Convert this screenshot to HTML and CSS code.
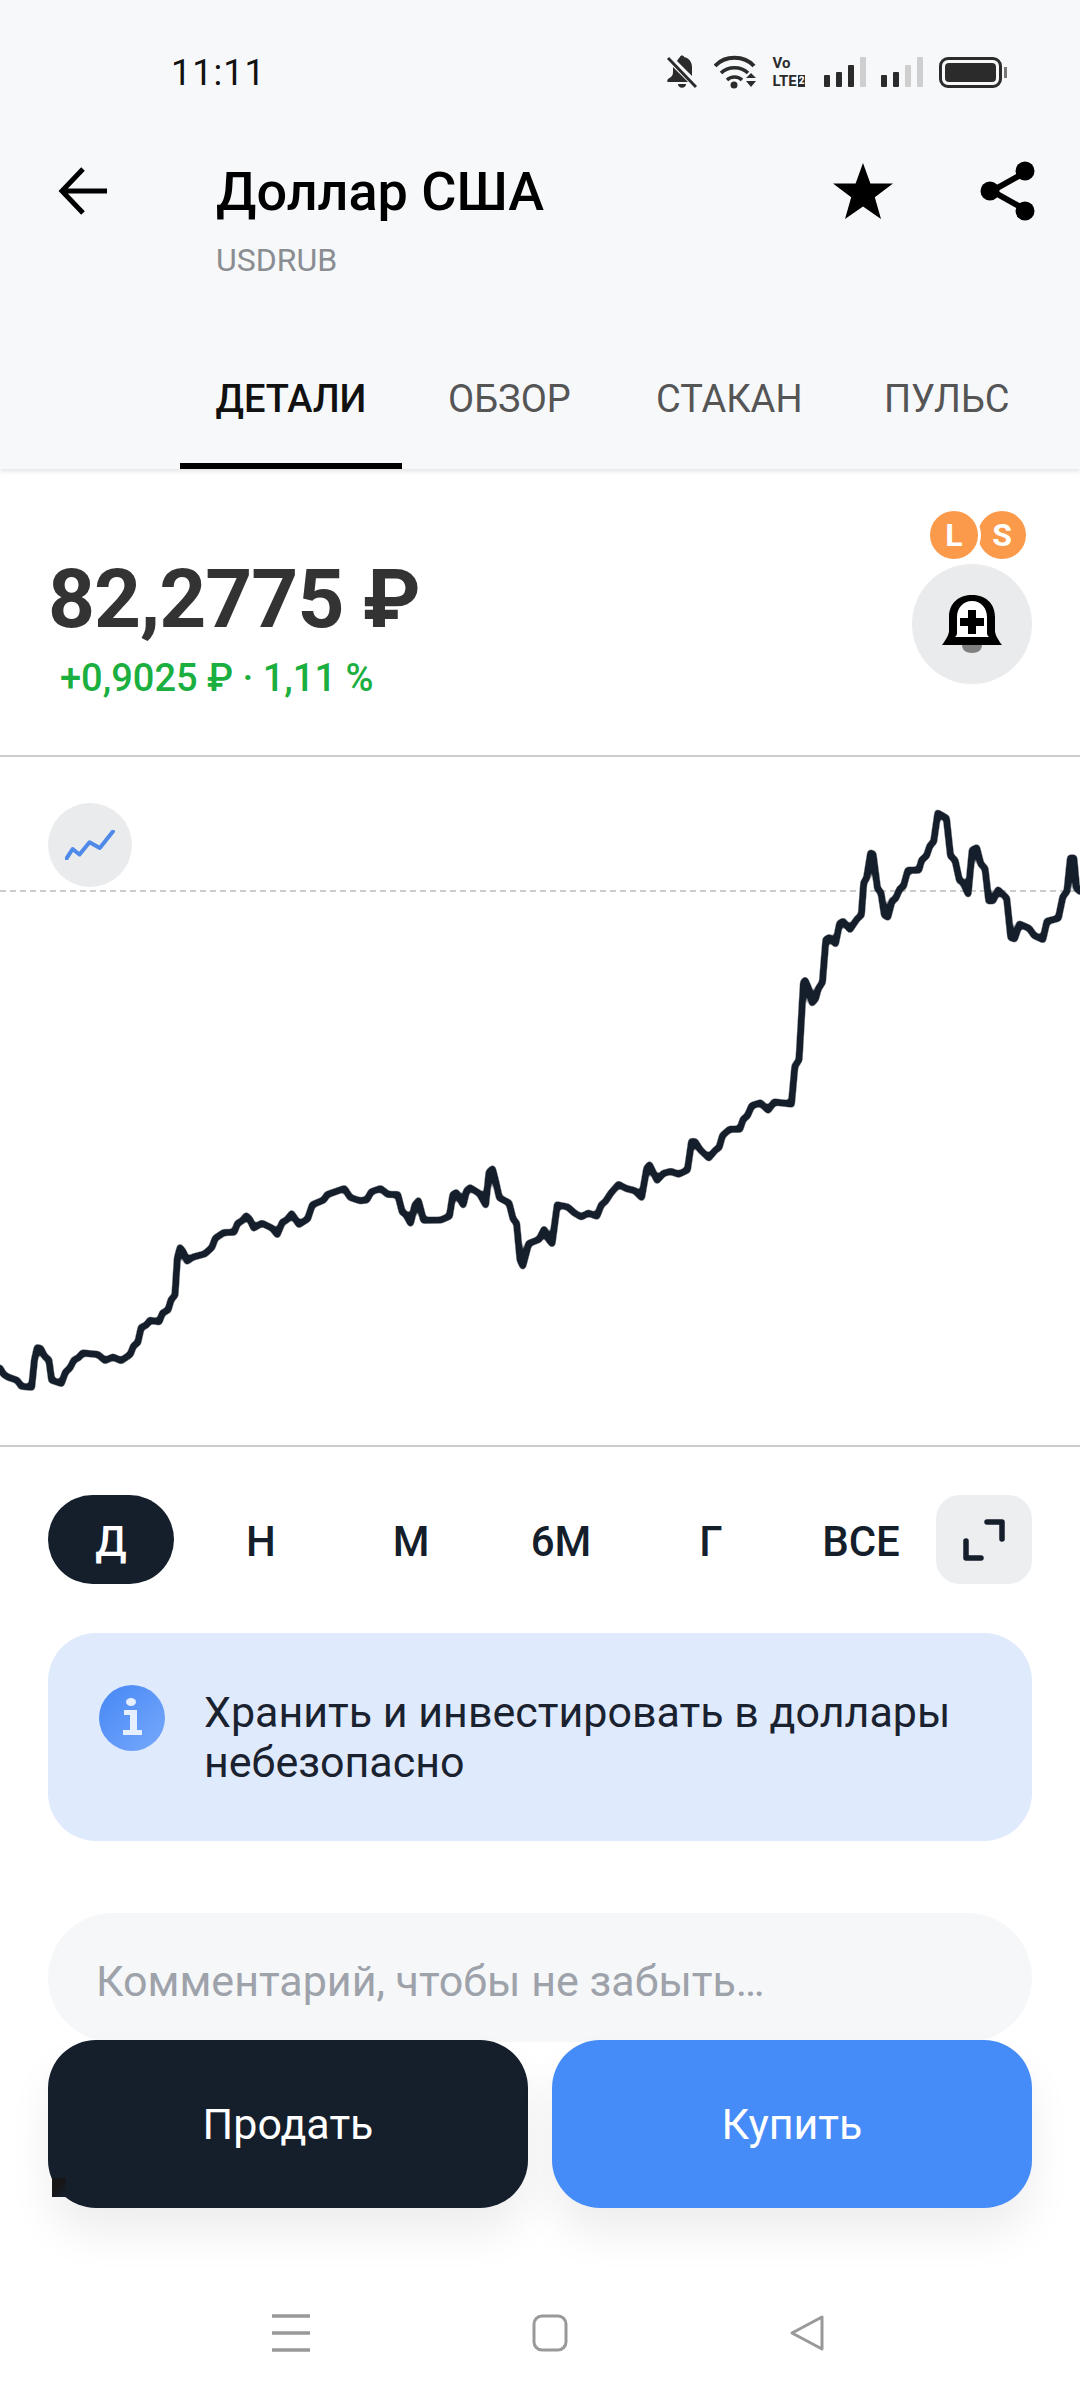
FILE: index.html
```html
<!DOCTYPE html>
<html lang="ru">
<head>
<meta charset="utf-8">
<title>Доллар США</title>
<link rel="stylesheet" href="styles.css">
</head>
<body>
<div class="screen">
  <header class="top">
    <div class="status">
      <span class="clock">11:11</span>
      <div class="status-icons">
        <svg class="si-bell" viewBox="0 0 30 34" width="30" height="34"><path fill="#2b2b2b" d="M13 2c0-2 4-2 4 0 5 1 8 5 8 10v9l-15-15c1-2 2-3 3-4zM6 12l15 15H1c-1 0-1-2 0-3 3-2 5-3 5-7zM11 29h8c0 5-8 5-8 0z"/><path stroke="#2b2b2b" stroke-width="3" d="M1 3l28 29"/></svg>
        <svg class="si-wifi" viewBox="0 0 42 34" width="42" height="34"><g fill="none" stroke="#2b2b2b" stroke-width="4"><path d="M1 11C11 0 30 0 40 11"/><path d="M7 18c7-7 20-7 27 0" stroke-width="3.5"/><path d="M13 25c4-4 11-4 15 0" stroke-width="3.5"/></g><circle cx="20" cy="30" r="3.5" fill="#2b2b2b"/><path fill="#2b2b2b" d="M38 18l5 5H33zM33 26h10l-5 6z" transform="translate(-1 0)"/></svg>
        <div class="si-volte"><span class="vo">Vo</span><span class="lte">LTE<b>2</b></span></div>
        <div class="bars"><i class="b1"></i><i class="b2"></i><i class="b3"></i><i class="b4 off"></i></div>
        <div class="bars"><i class="b1"></i><i class="b2"></i><i class="b3 off"></i><i class="b4 off"></i></div>
        <div class="battery"><div class="battery-fill"></div></div>
      </div>
    </div>
    <div class="title-row">
      <svg class="back" viewBox="0 0 50 50" width="50" height="50"><path d="M49 25H6M25 3L4 25l21 22" fill="none" stroke="#000" stroke-width="5"/></svg>
      <div class="title-text">
        <h1 class="title">Доллар США</h1>
        <div class="ticker">USDRUB</div>
      </div>
      <svg class="star" viewBox="0 0 60 56" width="60" height="56"><path d="M30 0l7.4 20.5H60L41.8 34.2 48 56 30 43.5 12 56l6.2-21.8L0 20.5h22.6z"/></svg>
      <svg class="share" viewBox="0 0 56 60" width="56" height="60"><path d="M44 12L12 30l32 18" fill="none" stroke="#000" stroke-width="6"/><circle cx="45" cy="10" r="9.5"/><circle cx="10" cy="30" r="9.5"/><circle cx="45" cy="50" r="9.5"/></svg>
    </div>
    <nav class="tabs">
      <div class="tab active">ДЕТАЛИ</div>
      <div class="tab t2">ОБЗОР</div>
      <div class="tab t3">СТАКАН</div>
      <div class="tab t4">ПУЛЬС</div>
    </nav>
  </header>

  <section class="quote">
    <div class="quote-text">
      <div class="price">82,2775 ₽</div>
      <div class="change">+0,9025 ₽ · 1,11 %</div>
    </div>
    <div class="alert">
      <div class="flags"><span class="flag">L</span><span class="flag flag-s">S</span></div>
      <div class="bell-btn">
        <svg viewBox="0 0 60 58" width="60" height="58"><path fill="#808080" d="M20 50h20c0 5-4 8-10 8s-10-3-10-8z"/><path d="M30 0C42 0 53 7 53 22V36C53 40 57 46 60 50H0C3 46 7 40 7 36V22C7 7 18 0 30 0z"/><path fill="#fff" d="M30 6C39 6 45 13 45 22V38C45 40 46 41 47 42H13C14 41 15 40 15 38V22C15 13 21 6 30 6z"/><path d="M26 15h8v8h8v8h-8v8h-8v-8h-8v-8h8z"/></svg>
      </div>
    </div>
  </section>

  <section class="chart">
    <svg class="chart-svg" viewBox="0 0 1080 688" width="1080" height="688">
      <defs>
        <filter id="soft" filterUnits="userSpaceOnUse" x="0" y="0" width="1080" height="688" color-interpolation-filters="sRGB">
          <feGaussianBlur stdDeviation="1.5"/>
          <feComponentTransfer><feFuncA type="linear" slope="3" intercept="-0.85"/></feComponentTransfer>
        </filter>
      </defs>
      <path class="ref-line" d="M0 134H1080"/>
      <g filter="url(#soft)">
      <g transform="translate(0 23.5) scale(.3444 .408)">
        <polyline class="curve" points="0,1440 10,1455 25,1463 50,1470 62,1485 92,1487 100,1420 108,1390 118,1392 130,1412 142,1420 150,1470 178,1478 190,1450 203,1440 215,1420 228,1415 240,1403 285,1407 305,1422 328,1413 352,1422 378,1407 388,1385 400,1378 410,1340 425,1335 435,1323 462,1327 472,1305 488,1298 497,1272 508,1262 515,1170 523,1145 532,1155 543,1178 560,1168 595,1160 615,1145 625,1122 650,1108 680,1107 690,1085 702,1080 715,1067 725,1075 737,1097 760,1085 790,1097 805,1113 820,1082 832,1078 847,1062 868,1088 893,1075 907,1040 940,1028 950,1015 1000,1000 1017,1022 1045,1030 1065,1028 1078,1008 1105,1000 1127,1015 1155,1015 1168,1058 1178,1063 1192,1085 1205,1040 1215,1030 1230,1078 1280,1077 1305,1068 1315,1015 1325,1010 1345,1040 1355,1005 1365,998 1392,1012 1410,1040 1420,960 1430,952 1440,985 1450,1023 1478,1035 1490,1075 1500,1085 1510,1175 1518,1190 1535,1135 1565,1125 1568,1120 1580,1100 1593,1125 1603,1135 1618,1040 1648,1045 1668,1060 1688,1070 1708,1060 1733,1068 1746,1040 1758,1032 1773,1012 1796,990 1818,1000 1843,1005 1863,1022 1878,950 1886,942 1908,980 1926,963 1948,958 1970,965 1996,955 2008,885 2018,885 2033,905 2058,925 2078,905 2088,900 2098,870 2118,855 2148,855 2158,830 2170,822 2183,797 2208,790 2230,808 2248,788 2298,793 2308,700 2320,685 2333,495 2338,490 2348,510 2358,545 2368,535 2376,510 2388,495 2398,390 2408,385 2426,400 2438,350 2448,345 2468,365 2488,340 2501,330 2508,250 2516,240 2528,178 2535,180 2548,265 2558,275 2568,330 2578,335 2590,295 2600,290 2613,265 2623,260 2636,220 2668,220 2676,195 2690,185 2700,160 2711,150 2723,80 2748,92 2760,185 2773,195 2786,245 2796,250 2811,278 2823,170 2836,165 2848,205 2860,215 2871,295 2883,295 2898,268 2923,288 2935,385 2946,388 2960,352 2988,362 3003,380 3028,390 3040,345 3073,338 3086,285 3098,272 3108,190 3118,190 3126,265 3136,272"/>
      </g>
      </g>
    </svg>
    <div class="chart-toggle">
      <svg viewBox="0 0 50 30" width="50" height="30"><path d="M1.4 28.6L7.6 19l6.9 5.5 10-12.3L34.8 18 47.9 1.6" fill="none" stroke="#4f8ae8" stroke-width="4" stroke-linecap="round" stroke-linejoin="round"/></svg>
    </div>
  </section>

  <section class="ranges">
    <div class="range active">Д</div>
    <div class="range">Н</div>
    <div class="range">М</div>
    <div class="range">6М</div>
    <div class="range">Г</div>
    <div class="range">ВСЕ</div>
    <div class="expand">
      <svg viewBox="0 0 42 42" width="42" height="42"><path d="M24 3H39V20M3 22V39H18" fill="none" stroke="#151e2b" stroke-width="5.5" stroke-linejoin="round" stroke-linecap="round"/></svg>
    </div>
  </section>

  <section class="notice">
    <div class="notice-icon">
      <svg viewBox="0 0 66 66" width="66" height="66"><ellipse cx="32" cy="17" rx="5" ry="4"/><path d="M25 25h13v20h5v5H24v-5h7V30h-6z"/></svg>
    </div>
    <p class="notice-text">Хранить и инвестировать в доллары небезопасно</p>
  </section>

  <div class="comment">Комментарий, чтобы не забыть…</div>

  <div class="actions">
    <div class="action sell">Продать</div>
    <div class="action buy">Купить</div>
  </div>

  <div class="sysnav">
    <svg viewBox="0 0 38 38" width="38" height="38"><path d="M0 2h38M0 19h38M0 36h38" stroke="#999" stroke-width="3.5"/></svg>
    <svg viewBox="0 0 36 38" width="36" height="38"><rect x="2" y="2" width="32" height="34" rx="8" fill="none" stroke="#999" stroke-width="3"/></svg>
    <svg viewBox="0 0 36 38" width="36" height="38"><path d="M33 3v32L3 19z" fill="none" stroke="#999" stroke-width="3" stroke-linejoin="round"/></svg>
  </div>
</div>
</body>
</html>
```

FILE: styles.css
```css
* { box-sizing: border-box; }
html, body { margin: 0; padding: 0; background: #fff; }
body { font-family: Roboto, "Noto Sans", sans-serif; color: #151e2b; }
.screen { width: 1080px; height: 2400px; overflow: hidden; display: flex; flex-direction: column; }

.top { height: 469px; padding-top: 44px; background: #f7f8fa; box-shadow: 0 2px 5px rgba(0,0,0,.12); position: relative; z-index: 1; flex: none; }
.status { display: flex; justify-content: space-between; align-items: center; height: 56px; padding: 0 74px 0 171px; }
.clock { font-size: 36px; color: #111; letter-spacing: 1px; padding-top: 2px; }
.status-icons { display: flex; align-items: center; }
.si-bell { margin-right: 17px; }
.si-wifi { margin-right: 17px; }
.si-volte { width: 38px; height: 36px; margin-right: 13px; display: flex; flex-direction: column; font-weight: 700; font-size: 15px; line-height: 18px; color: #2b2b2b; }
.vo { font-size: 15px; }
.lte { display: flex; align-items: center; }
.lte b { background: #2b2b2b; color: #f7f8fa; font-size: 10px; line-height: 12px; margin-left: 1px; padding: 0 1px; }
.bars { display: flex; align-items: flex-end; gap: 5.5px; height: 30px; margin-right: 14.5px; }
.bars + .battery { margin-left: 1.5px; }
.bars i { display: block; width: 6.5px; background: #2b2b2b; border-radius: 1px; }
.bars .b1 { height: 12px; }
.bars .b2 { height: 15px; }
.bars .b3 { height: 22px; }
.bars .b4 { height: 30px; }
.bars .off { background: #cfcfcf; }
.battery { width: 63px; height: 31px; border: 3px solid #2b2b2b; border-radius: 9px; padding: 3px; position: relative; margin-right: 4px; }
.battery::after { content: ""; position: absolute; right: -8px; top: 7px; width: 3px; height: 11px; background: #777; }
.battery-fill { width: 100%; height: 100%; background: #2b2b2b; border-radius: 4px; }

.title-row { display: flex; align-items: flex-start; height: 120px; margin-top: 62px; padding-left: 58px; }
.back { margin-top: 4px; margin-right: 108px; flex: none; }
.title-text { flex: 1; }
.title { margin: 0; font-size: 54px; font-weight: 500; line-height: 60px; color: #000; }
.ticker { margin-top: 20px; font-size: 32px; line-height: 36px; color: #8a8d91; }
.star { margin-top: 1px; margin-right: 87px; }
.share { margin-top: -1px; margin-right: 44px; }

.tabs { display: flex; height: 94px; margin-top: 93px; padding-left: 180px; }
.tab { font-size: 38px; line-height: 48px; color: #555; }
.tab.active { width: 222px; height: 94px; text-align: center; color: #111; font-weight: 500; border-bottom: 6px solid #000; }
.tab.t2 { width: 254px; padding-left: 46px; }
.tab.t3 { width: 228px; }

.quote { height: 288px; display: flex; justify-content: space-between; padding: 0 48px; border-bottom: 2px solid #ccc; flex: none; }
.quote-text { padding-top: 75px; }
.price { font-size: 82px; letter-spacing: -1px; line-height: 110px; font-weight: 700; color: #333; white-space: nowrap; }
.change { font-size: 38px; line-height: 44px; font-weight: 500; color: #1aaf3f; padding: 2px 0 0 12px; }
.alert { display: flex; flex-direction: column; align-items: center; padding-top: 42px; }
.flags { display: flex; margin-left: 12px; }
.flag { width: 48px; height: 48px; border-radius: 50%; background: #fc9a4b; color: #fff; font-size: 32px; font-weight: 700; display: flex; align-items: center; justify-content: center; position: relative; z-index: 1; box-shadow: 0 0 0 3px #fff; }
.flag-s { z-index: 0; box-shadow: none; }
.bell-btn { width: 120px; height: 120px; border-radius: 50%; background: #e9ebed; display: flex; align-items: center; justify-content: center; margin-top: 5px; }

.chart { height: 690px; position: relative; border-bottom: 2px solid #ccc; flex: none; }
.chart-svg { display: block; }
.ref-line { stroke: #ccc; stroke-width: 2; stroke-dasharray: 6 4; fill: none; }
.curve { fill: none; stroke: #151e2b; stroke-width: 6.5; stroke-linejoin: round; stroke-linecap: round; vector-effect: non-scaling-stroke; }
.chart-toggle { position: absolute; left: 48px; top: 46px; width: 84px; height: 84px; border-radius: 50%; background: #e9ebed; display: flex; align-items: center; justify-content: center; }

.ranges { display: flex; gap: 24px; height: 89px; margin: 48px 48px 0; flex: none; align-items: stretch; }
.range { width: 126px; padding-top: 3px; display: flex; align-items: center; justify-content: center; font-size: 42px; font-weight: 500; color: #151e2b; border-radius: 45px; }
.range.active { background: #151e2b; color: #fff; }
.expand { width: 96px; margin-left: -12px; background: #eceef0; border-radius: 24px; display: flex; align-items: center; justify-content: center; }

.notice { display: flex; margin: 49px 48px 0; height: 208px; background: #dfeafc; border-radius: 48px; padding: 52px 50px 0 51px; flex: none; }
.notice-icon { width: 66px; height: 66px; border-radius: 50%; background: linear-gradient(135deg, #4587f5, #78a9fb); fill: #e6efff; flex: none; }
.notice-icon svg { display: block; }
.notice-text { margin: 2px 0 0 39px; font-size: 43px; line-height: 50px; color: #1a2230; }

.comment { height: 129px; margin: 72px 48px 0; background: #f5f7f8; border-radius: 65px; padding-left: 48px; font-size: 43px; line-height: 136px; color: #9ea2aa; flex: none; }

.actions { display: flex; gap: 24px; height: 168px; margin: -2px 48px 0; position: relative; flex: none; }
.action { flex: 1; display: flex; align-items: center; justify-content: center; border-radius: 48px; color: #fff; font-size: 43px; box-shadow: 0 26px 44px rgba(0,0,0,.07); position: relative; }
.sell { background: #151e2b; }
.sell::before { content: ""; position: absolute; left: 4px; bottom: 11px; width: 14px; height: 19px; background: linear-gradient(135deg, #17171a 50%, #151e2b 85%); }
.buy { background: #458cf8; }

.sysnav { display: flex; height: 38px; margin-top: 106px; padding: 0 255px 0 272px; justify-content: space-between; flex: none; }
```
